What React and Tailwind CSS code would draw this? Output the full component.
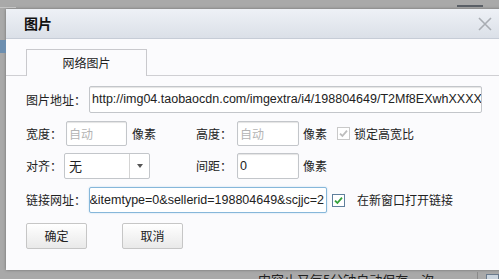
import React from 'react';

const cjk = { fontFamily: '"Noto Sans CJK SC", "DejaVu Sans", sans-serif' };
const latin = { fontFamily: '"Liberation Sans", "Noto Sans CJK SC", sans-serif' };

const Checkbox = ({ checked, disabled }) => (
  <span
    className={`flex h-[13px] w-[13px] items-center justify-center border bg-white ${
      disabled ? 'border-[#c9c9c9]' : 'border-[#5f7f9c]'
    }`}
  >
    <svg width="9" height="9" viewBox="0 0 9 9">
      <path
        d="M1 4.6 L3.4 7 L8 1.6"
        fill="none"
        stroke={disabled ? '#bdbdbd' : '#34a13a'}
        strokeWidth="1.8"
      />
    </svg>
  </span>
);

const TextBox = ({ width, value, placeholder, focused, alignEnd }) => (
  <div
    className={`flex h-full items-center overflow-hidden whitespace-nowrap rounded-[2px] border bg-white px-[2px] text-[12.5px] ${width} ${
      focused
        ? 'border-[#86b7da] shadow-[0_0_2px_#bcd9ee]'
        : 'border-[#c3c6ca] shadow-[inset_0_1px_1px_#e4e4e4]'
    } ${alignEnd ? 'justify-end' : ''}`}
    style={latin}
  >
    {value ? (
      <span className="text-[#222]">{value}</span>
    ) : (
      <span className="text-[12px] text-[#b4b4b4]" style={cjk}>
        {placeholder}
      </span>
    )}
  </div>
);

const Button = ({ children }) => (
  <button
    className="flex h-[26px] w-[61px] items-center justify-center rounded-[2px] border border-[#c6c6c6] bg-gradient-to-b from-[#ffffff] to-[#e9e9e9] text-[12px] text-[#222]"
    style={cjk}
  >
    {children}
  </button>
);

export default function App() {
  return (
    <div className="relative h-[279px] w-[499px] overflow-hidden bg-[#a9a9a9]" style={cjk}>
      {/* page bits behind the dialog */}
      <div className="absolute left-0 top-[7px] h-px w-[16px] bg-[#c4c4c4]" />
      <div className="absolute left-[457px] top-[5px] h-[2px] w-[26px] bg-[#5a5f66]" />
      <div className="absolute left-0 top-[40px] h-[13px] w-[6px] bg-[#6d8fb0]" />

      <div className="flex flex-col pl-[6px] pt-[9px]">
        {/* dialog */}
        <div className="flex h-[261px] w-[500px] flex-col bg-[#fbfbfd] shadow-[0_0_3px_rgba(0,0,0,0.35)]">
          <div className="flex h-[30px] items-center justify-between border-b border-[#c6ccd6] bg-gradient-to-b from-[#eef1f6] to-[#dbe0e8] pl-[18px] pr-[10px]">
            <span className="text-[14px] font-bold text-[#111]">图片</span>
            <svg width="16" height="16" viewBox="0 0 16 16" className="mr-[3px]">
              <path d="M2 2 L14 14 M14 2 L2 14" stroke="#a9adb3" strokeWidth="1.6" />
            </svg>
          </div>

          {/* tabs */}
          <div className="flex h-[37px] items-end border-b border-[#cfcfd3] pl-[20px]">
            <div className="-mb-px flex h-[27px] w-[121px] items-center justify-center border border-b-0 border-[#c9c9cd] bg-[#fbfbfd] text-[12px] text-[#222]">
              网络图片
            </div>
          </div>

          <div className="flex flex-col px-[20px] pt-[10px] text-[12px] text-[#222]">
            {/* row 1 */}
            <div className="flex h-[27px] items-center">
              <span className="w-[63px]">图片地址：</span>
              <TextBox
                width="w-[393px]"
                value="http://img04.taobaocdn.com/imgextra/i4/198804649/T2Mf8EXwhXXXX"
              />
            </div>

            {/* row 2 */}
            <div className="mt-[8px] flex h-[25px] items-center">
              <span className="w-[40px]">宽度：</span>
              <TextBox width="w-[61px]" placeholder="自动" />
              <span className="ml-[5px] w-[64px]">像素</span>
              <span className="w-[41px]">高度：</span>
              <TextBox width="w-[62px]" placeholder="自动" />
              <span className="ml-[4px]">像素</span>
              <span className="ml-[10px]">
                <Checkbox checked disabled />
              </span>
              <span className="ml-[4px]">锁定高宽比</span>
            </div>

            {/* row 3 */}
            <div className="mt-[7px] flex h-[26px] items-center">
              <span className="w-[38px]">对齐：</span>
              <div className="flex h-full w-[86px] items-center rounded-[2px] border border-[#c3c6ca] bg-white">
                <span className="flex-1 pl-[4px] text-[13px]">无</span>
                <span className="flex h-full w-[20px] items-center justify-center border-l border-[#d4d4d4]">
                  <svg width="6" height="4" viewBox="0 0 6 4">
                    <path d="M0 0 H6 L3 4 Z" fill="#555" />
                  </svg>
                </span>
              </div>
              <span className="ml-[46px] w-[41px]">间距：</span>
              <TextBox width="w-[62px]" value="0" />
              <span className="ml-[4px]">像素</span>
            </div>

            {/* row 4 */}
            <div className="mt-[8px] flex h-[26px] items-center">
              <span className="w-[63px]">链接网址：</span>
              <TextBox
                width="w-[238px]"
                value="&itemtype=0&sellerid=198804649&scjjc=2"
                focused
                alignEnd
              />
              <span className="ml-[5px]">
                <Checkbox checked />
              </span>
              <span className="ml-[12px]">在新窗口打开链接</span>
            </div>

            {/* buttons */}
            <div className="mt-[10px] flex items-center gap-[35px]">
              <Button>确定</Button>
              <Button>取消</Button>
            </div>
          </div>
        </div>

        {/* status strip under the dialog */}
        <div className="-mt-px flex h-[20px] items-start whitespace-nowrap pt-[2px] text-[13px] leading-[18px] text-[#222]">
          <span className="ml-[252px]">内容止又每5分钟自动保存一次。</span>
          <span className="ml-[30px] mt-[1px] h-[18px] w-px bg-[#8a8a8a]" />
          <span className="ml-[8px] mt-[3px] h-[14px] w-[14px] border border-[#6a7a8c] bg-[#c9d3dd]" />
        </div>
      </div>
    </div>
  );
}
